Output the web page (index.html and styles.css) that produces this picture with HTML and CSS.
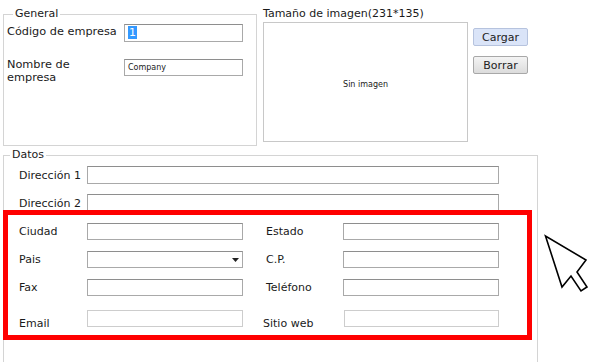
FILE: index.html
```html
<!DOCTYPE html>
<html lang="es">
<head>
  <meta charset="UTF-8">
  <title>Empresa</title>
  <link rel="stylesheet" href="styles.css">
</head>
<body>
  <div class="top">
    <fieldset class="general">
      <legend>General</legend>
      <div class="general-grid">
        <label>Código de empresa</label>
        <div class="field code"><span class="sel">1</span></div>
        <label class="two-line">Nombre de empresa</label>
        <div class="field name">Company</div>
      </div>
    </fieldset>

    <div class="picture">
      <div class="picture-title">Tamaño de imagen(231*135)</div>
      <div class="picture-box">Sin imagen</div>
    </div>

    <div class="buttons">
      <button class="btn btn-load">Cargar</button>
      <button class="btn">Borrar</button>
    </div>
  </div>

  <fieldset class="datos">
    <legend>Datos</legend>
    <div class="addr-row first">
      <label>Dirección 1</label>
      <div class="field wide"></div>
    </div>
    <div class="addr-row">
      <label>Dirección 2</label>
      <div class="field wide"></div>
    </div>

    <div class="highlight">
      <div class="row">
        <label>Ciudad</label><div class="field"></div>
        <label>Estado</label><div class="field"></div>
      </div>
      <div class="row">
        <label>Pais</label>
        <div class="field select">
          <svg width="7" height="4" viewBox="0 0 7 4"><path d="M0 0h7L3.5 4z" fill="#222"/></svg>
        </div>
        <label>C.P.</label><div class="field"></div>
      </div>
      <div class="row row-fax">
        <label>Fax</label><div class="field"></div>
        <label>Teléfono</label><div class="field"></div>
      </div>
      <div class="row row-last">
        <label>Email</label><div class="field light"></div>
        <label class="web">Sitio web</label><div class="field light web-field"></div>
      </div>
    </div>
  </fieldset>

  <svg class="cursor" width="48" height="64" viewBox="0 0 48 64">
    <path d="M1.5 5 L18 56 L27 45 L37 60 L43 56 L33 41 L42 29 Z" fill="#fff" stroke="#000" stroke-width="1.6" stroke-linejoin="miter"/>
  </svg>
</body>
</html>
```

FILE: styles.css
```css
body {
  margin: 0;
  padding-top: 8px;
  font-family: "DejaVu Sans", Verdana, sans-serif;
  font-size: 11px;
  color: #1a1a1a;
  background: #fff;
  position: relative;
  height: 362px;
  overflow: hidden;
}

fieldset {
  border: 1px solid #d4d4d4;
  margin: 0;
  padding: 0;
}

legend {
  padding: 0 2px;
  margin-left: 6px;
  line-height: 12px;
}

label {
  display: block;
}

.field {
  box-sizing: border-box;
  height: 18px;
  border: 1px solid #a9a9a9;
  border-top-color: #8e8e8e;
  background: #fff;
  font-size: 8px;
  line-height: 16px;
  padding-left: 3px;
}

.top {
  display: flex;
  align-items: flex-start;
}

.general {
  margin-left: 3px;
  width: 254px;
  height: 138px;
  box-sizing: border-box;
  padding: 3px 0 0 3px;
}

.general-grid {
  display: grid;
  grid-template-columns: 117px 119px;
  row-gap: 16px;
  align-items: start;
}

.general-grid label {
  font-size: 11.3px;
  line-height: 12px;
  padding-top: 3px;
}

.general-grid .two-line {
  width: 80px;
  padding-top: 0;
  margin-top: 1px;
  line-height: 12.5px;
}

.code {
  margin-top: 1px;
}

.name {
  margin-top: 1px;
  height: 17px;
}

.sel {
  background: #3399ff;
  color: #fff;
  padding: 0 1px;
  font-size: 11px;
}

.picture {
  margin-left: 6px;
  width: 205px;
}

.picture-title {
  line-height: 13px;
  margin-top: -1px;
}

.picture-box {
  box-sizing: border-box;
  height: 120px;
  margin-top: 2px;
  border: 1px solid #c8c8c8;
  display: flex;
  align-items: center;
  justify-content: center;
  font-size: 8px;
  padding-top: 4px;
}

.buttons {
  margin-left: 5px;
  margin-top: 20px;
  display: flex;
  flex-direction: column;
  gap: 10px;
}

.btn {
  width: 55px;
  height: 18px;
  padding: 0;
  font-family: inherit;
  font-size: 11px;
  color: #222;
  border: 1px solid #a8a8a8;
  border-radius: 2px;
  background: linear-gradient(#f4f4f4, #dcdcdc);
}

.btn-load {
  background: #dae4f8;
  border-color: #b6c3de;
}

.datos {
  margin: 3px 0 0 3px;
  width: 535px;
  box-sizing: border-box;
  height: 220px;
  padding: 0;
}

.addr-row {
  display: flex;
  align-items: center;
  padding-left: 15px;
  margin-bottom: 10px;
}

.addr-row.first {
  margin-top: 5px;
}

.addr-row label {
  width: 68px;
}

.wide {
  width: 412px;
}

.highlight {
  border: 5px solid #ff0000;
  margin-left: -1px;
  width: 529px;
  box-sizing: border-box;
  margin-top: -12px;
  position: relative;
  background: #fff;
  padding: 8px 0 8px 11px;
}

.row {
  display: grid;
  grid-template-columns: 68px 156px 23px 77px 156px;
  align-items: center;
  margin-bottom: 11px;
}

.row.row-fax {
  margin-bottom: 14px;
}

.row label:nth-of-type(2) {
  grid-column: 4;
}

.row .field {
  height: 17px;
}

.row-last {
  margin-bottom: 0;
  align-items: end;
}

.row-last label {
  margin-bottom: -3px;
}

.light {
  border-color: #cdcdcd;
}

.web {
  margin-left: -3px;
}

.web-field {
  margin-left: 1px;
}

.select {
  display: flex;
  align-items: center;
  justify-content: flex-end;
  padding-right: 3px;
}

.cursor {
  position: absolute;
  left: 544px;
  top: 231px;
}
```
